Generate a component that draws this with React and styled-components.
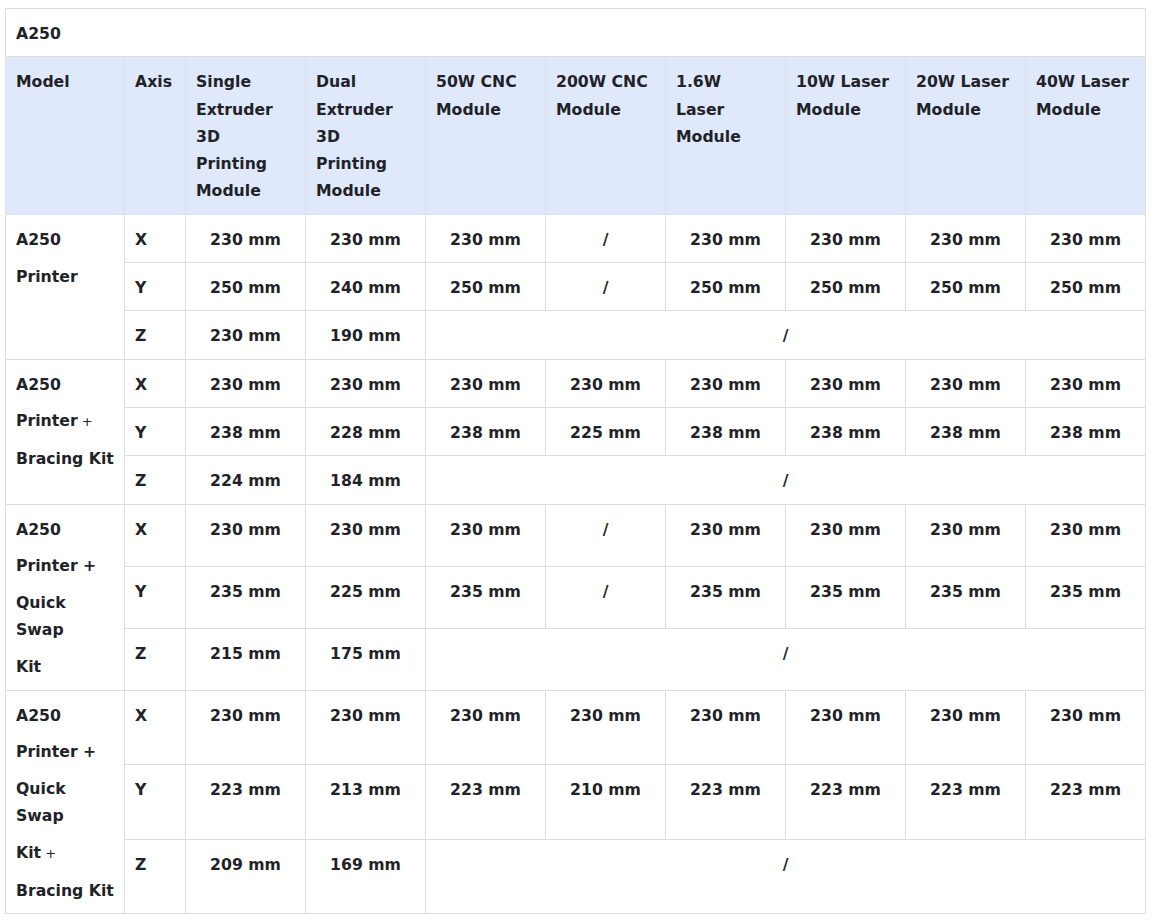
import React from "react";
import styled, { createGlobalStyle } from "styled-components";

const GlobalStyle = createGlobalStyle`
  body {
    margin: 8px 5px;
    background: #ffffff;
    font-family: "DejaVu Sans", Verdana, sans-serif;
    color: #1f2328;
  }
`;

const modules = [
  "Single Extruder 3D Printing Module",
  "Dual Extruder 3D Printing Module",
  "50W CNC Module",
  "200W CNC Module",
  "1.6W Laser Module",
  "10W Laser Module",
  "20W Laser Module",
  "40W Laser Module",
];

const groups = [
  {
    model: ["A250", "Printer"],
    x: ["230 mm", "230 mm", "230 mm", "/", "230 mm", "230 mm", "230 mm", "230 mm"],
    y: ["250 mm", "240 mm", "250 mm", "/", "250 mm", "250 mm", "250 mm", "250 mm"],
    z: ["230 mm", "190 mm"],
  },
  {
    model: ["A250", ["Printer", true], "Bracing Kit"],
    x: ["230 mm", "230 mm", "230 mm", "230 mm", "230 mm", "230 mm", "230 mm", "230 mm"],
    y: ["238 mm", "228 mm", "238 mm", "225 mm", "238 mm", "238 mm", "238 mm", "238 mm"],
    z: ["224 mm", "184 mm"],
  },
  {
    model: ["A250", "Printer +", "Quick Swap", "Kit"],
    x: ["230 mm", "230 mm", "230 mm", "/", "230 mm", "230 mm", "230 mm", "230 mm"],
    y: ["235 mm", "225 mm", "235 mm", "/", "235 mm", "235 mm", "235 mm", "235 mm"],
    z: ["215 mm", "175 mm"],
  },
  {
    model: ["A250", "Printer +", "Quick Swap", ["Kit", true], "Bracing Kit"],
    x: ["230 mm", "230 mm", "230 mm", "230 mm", "230 mm", "230 mm", "230 mm", "230 mm"],
    y: ["223 mm", "213 mm", "223 mm", "210 mm", "223 mm", "223 mm", "223 mm", "223 mm"],
    z: ["209 mm", "169 mm"],
  },
];

const ModelLine = ({ line }) => {
  if (Array.isArray(line)) {
    return (
      <Line>
        {line[0]}
        <Plus> +</Plus>
      </Line>
    );
  }
  return <Line>{line}</Line>;
};

const App = () => {
  return (
    <>
      <GlobalStyle />
      <Table>
        <colgroup>
          <col style={{ width: 119 }} />
          <col style={{ width: 61 }} />
          {modules.map((m) => (
            <col key={m} style={{ width: 120 }} />
          ))}
        </colgroup>
        <tbody>
          <tr>
            <TitleCell colSpan={10}>A250</TitleCell>
          </tr>
          <tr>
            <HeadCell>Model</HeadCell>
            <HeadCell>Axis</HeadCell>
            {modules.map((m) => (
              <HeadCell key={m}>{m}</HeadCell>
            ))}
          </tr>
          {groups.map((g, i) => (
            <React.Fragment key={i}>
              <tr>
                <ModelCell rowSpan={3}>
                  {g.model.map((l, j) => (
                    <ModelLine key={j} line={l} />
                  ))}
                </ModelCell>
                <Cell>X</Cell>
                {g.x.map((v, j) => (
                  <Cell key={j} $center>
                    {v}
                  </Cell>
                ))}
              </tr>
              <tr>
                <Cell>Y</Cell>
                {g.y.map((v, j) => (
                  <Cell key={j} $center>
                    {v}
                  </Cell>
                ))}
              </tr>
              <tr>
                <Cell>Z</Cell>
                {g.z.map((v, j) => (
                  <Cell key={j} $center>
                    {v}
                  </Cell>
                ))}
                <Cell colSpan={6} $center>
                  /
                </Cell>
              </tr>
            </React.Fragment>
          ))}
        </tbody>
      </Table>
    </>
  );
};

export default App;

let Table = styled.table`
  width: 1141px;
  table-layout: fixed;
  border-collapse: collapse;
  font-size: 15.7px;
  font-weight: 700;
  line-height: 27.3px;
`;

let Cell = styled.td`
  border: 1px solid #dddddd;
  padding: 11px 10px 9px;
  vertical-align: top;
  text-align: ${(p) => (p.$center ? "center" : "left")};
  white-space: nowrap;
`;

let TitleCell = styled.td`
  border: 1px solid #dddddd;
  padding: 11px 10px 9px;
  text-align: left;
`;

let HeadCell = styled.th`
  border: 1px solid #dcdfe4;
  background: #e0e9fc;
  padding: 11px 12px 9px 10px;
  text-align: left;
  vertical-align: top;
  font-weight: 700;
`;

let ModelCell = styled.td`
  border: 1px solid #dddddd;
  padding: 11px 10px 9px;
  vertical-align: top;
  text-align: left;
`;

let Line = styled.div`
  margin-bottom: 9.5px;
  &:last-child {
    margin-bottom: 0;
  }
`;

let Plus = styled.span`
  font-weight: 400;
  font-size: 13px;
`;
